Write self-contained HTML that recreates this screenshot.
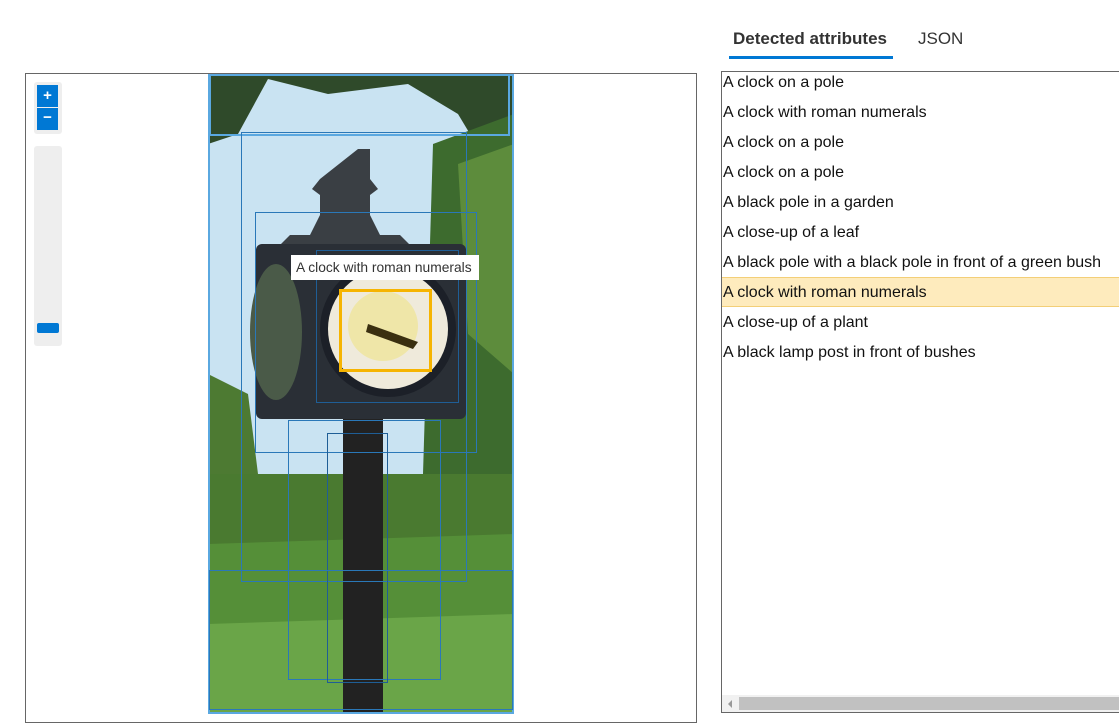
<!DOCTYPE html>
<html><head><meta charset="utf-8"><style>
*{margin:0;padding:0;box-sizing:border-box}
body{width:1119px;height:713px;overflow:hidden;background:#fff;font-family:"Liberation Sans",sans-serif;color:#222;position:relative}
.abs{position:absolute}
.tab{position:absolute;top:29px;font-size:17px}
.li{position:absolute;left:723px;font-size:16px;height:30px;line-height:20px;white-space:nowrap;color:#111}
</style></head><body>
<div class="tab" style="left:733px;font-weight:bold;color:#333">Detected attributes</div>
<div class="abs" style="left:729px;top:56px;width:164px;height:3px;background:#0078d4"></div>
<div class="tab" style="left:918px;color:#333">JSON</div>

<div class="abs" style="left:25px;top:73px;width:672px;height:650px;border:1px solid #666"></div>
<div class="abs" style="left:34px;top:82px;width:28px;height:52px;background:#eee;border-radius:3px"></div>
<div class="abs" style="left:37px;top:85px;width:21px;height:22px;background:#0078d4;color:#fff;font-weight:bold;font-size:15px;text-align:center;line-height:22px">+</div>
<div class="abs" style="left:37px;top:108px;width:21px;height:22px;background:#0078d4;color:#fff;font-weight:bold;font-size:15px;text-align:center;line-height:20px">−</div>
<div class="abs" style="left:34px;top:146px;width:28px;height:200px;background:#eee;border-radius:3px"></div>
<div class="abs" style="left:37px;top:323px;width:22px;height:10px;background:#0078d4;border-radius:2px"></div>

<svg class="abs" style="left:208px;top:74px" width="306" height="640" viewBox="0 0 306 640">
<rect width="306" height="640" fill="#c9e3f2"/>
<path d="M0 0H306V60L280 90 250 40 200 10 120 20 60 5 30 60 0 70Z" fill="#2f4a2a"/>
<path d="M225 70 L306 40 V640 H230 L215 400 Z" fill="#3d6b2e"/>
<path d="M250 90 L306 70 V300 L260 260Z" fill="#5d8c3c"/>
<path d="M0 300 L40 320 L60 480 L0 500Z" fill="#4d7a32"/>
<rect x="0" y="400" width="306" height="240" fill="#4a7a30"/>
<path d="M0 470 L306 460 V640 H0Z" fill="#558f38"/>
<path d="M0 550 L306 540 V640 H0Z" fill="#6aa548"/>
<rect x="135" y="330" width="40" height="310" fill="#222"/>
<path d="M150 75 h12 v30 l8 10 -8 6 v20 l10 20 h20 l20 20 h-150 l20-20 h20 l10-20 v-20 l-8-6 8-10z" fill="#3a3f44"/>
<rect x="48" y="170" width="210" height="175" rx="6" fill="#2a2f36"/>
<ellipse cx="68" cy="258" rx="26" ry="68" fill="#4a5a48"/>
<circle cx="180" cy="255" r="68" fill="#1c2028"/>
<circle cx="180" cy="255" r="60" fill="#efeadb"/>
<circle cx="175" cy="252" r="35" fill="#efe6a8"/>
<path d="M160 250 L210 268 L205 275 L158 258Z" fill="#3a2f10"/>
</svg>
<div class="abs" style="left:208px;top:74px;width:306px;height:640px;border:2px solid #5aa8e0"></div>
<div class="abs" style="left:209px;top:74px;width:301px;height:62px;border:2px solid #5aa8e0"></div>
<div class="abs" style="left:241px;top:132px;width:226px;height:450px;border:1px solid #2a78b8"></div>
<div class="abs" style="left:255px;top:212px;width:222px;height:241px;border:1px solid #2a78b8"></div>
<div class="abs" style="left:316px;top:250px;width:143px;height:153px;border:1px solid #1f5e96"></div>
<div class="abs" style="left:288px;top:420px;width:153px;height:260px;border:1px solid #2a78b8"></div>
<div class="abs" style="left:327px;top:433px;width:61px;height:250px;border:1px solid #1f5e96"></div>
<div class="abs" style="left:209px;top:570px;width:304px;height:140px;border:1px solid #2a78b8"></div>
<div class="abs" style="left:339px;top:289px;width:93px;height:83px;border:3px solid #f6b400"></div>
<div class="abs" style="left:291px;top:255px;width:188px;height:25px;background:#fff;font-size:13.8px;line-height:25px;padding-left:5px;color:#333;white-space:nowrap">A clock with roman numerals</div>

<div class="abs" style="left:721px;top:71px;width:410px;height:642px;border:1px solid #666"></div>
<div class="abs" style="left:722px;top:277px;width:400px;height:30px;background:#feebbd;border-top:1px solid #f3cf78;border-bottom:1px solid #f3cf78"></div>
<div class="li" style="top:73px">A clock on a pole</div>
<div class="li" style="top:103px">A clock with roman numerals</div>
<div class="li" style="top:133px">A clock on a pole</div>
<div class="li" style="top:163px">A clock on a pole</div>
<div class="li" style="top:193px">A black pole in a garden</div>
<div class="li" style="top:223px">A close-up of a leaf</div>
<div class="li" style="top:253px">A black pole with a black pole in front of a green bush</div>
<div class="li" style="top:283px">A clock with roman numerals</div>
<div class="li" style="top:313px">A close-up of a plant</div>
<div class="li" style="top:343px">A black lamp post in front of bushes</div>
<div class="abs" style="left:722px;top:695px;width:400px;height:17px;background:#f1f1f1"></div>
<div class="abs" style="left:739px;top:697px;width:380px;height:13px;background:#c1c1c1"></div>
<div class="abs" style="left:728px;top:700px;width:0;height:0;border-top:4px solid transparent;border-bottom:4px solid transparent;border-right:4px solid #999"></div>
</body></html>
